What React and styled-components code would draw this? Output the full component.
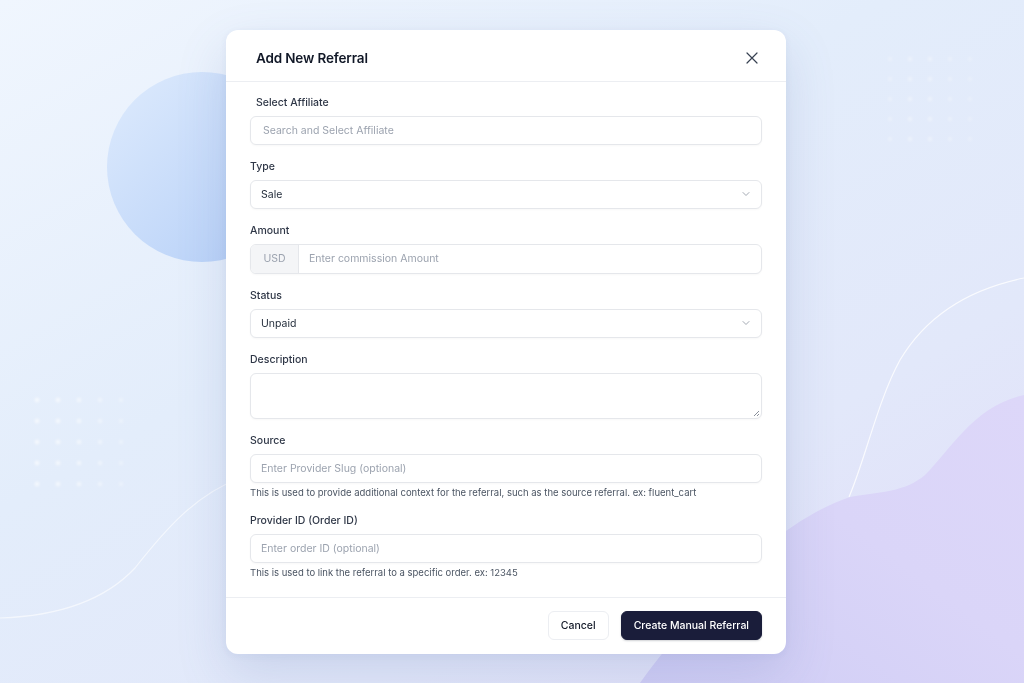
import React from 'react';
import styled, { createGlobalStyle } from 'styled-components';

const GlobalStyle = createGlobalStyle`
  html, body {
    margin: 0;
    padding: 0;
  }
  body {
    font-family: Inter, "Noto Sans", "Liberation Sans", sans-serif;
    -webkit-font-smoothing: antialiased;
  }
  * { box-sizing: border-box; }
`;

const Page = styled.div`
  position: relative;
  width: 1024px;
  height: 683px;
  overflow: hidden;
  background: linear-gradient(150deg, #f0f6fe 0%, #e3edfb 40%, #e2e8fa 70%, #e0dcf8 100%);
  display: flex;
  align-items: center;
  justify-content: center;
  padding-right: 12px;
`;

const Backdrop = styled.svg`
  position: absolute;
  inset: 0;
  width: 100%;
  height: 100%;
  z-index: 0;
`;

const Modal = styled.div`
  position: relative;
  z-index: 1;
  width: 560px;
  height: 624px;
  background: #ffffff;
  border-radius: 12px;
  box-shadow: 0 20px 50px rgba(90, 110, 170, 0.18), 0 2px 8px rgba(90, 110, 170, 0.08);
  display: flex;
  flex-direction: column;
  overflow: hidden;
`;

const Header = styled.div`
  height: 52px;
  flex-shrink: 0;
  display: flex;
  align-items: center;
  justify-content: space-between;
  padding: 6px 26px 0 30px;
  border-bottom: 1px solid #eceef2;
`;

const Title = styled.h2`
  margin: 0;
  font-size: 13.5px;
  font-weight: 600;
  color: #111827;
  letter-spacing: -0.15px;
`;

const CloseButton = styled.button`
  border: none;
  background: none;
  padding: 0;
  width: 16px;
  height: 16px;
  display: flex;
  align-items: center;
  justify-content: center;
  color: #374151;
  cursor: pointer;
`;

const Body = styled.div`
  flex: 1;
  padding: 13px 24px 0;
  display: flex;
  flex-direction: column;
`;

const Field = styled.div`
  display: flex;
  flex-direction: column;
  margin-bottom: 14px;
`;

const Label = styled.label`
  font-size: 10.5px;
  font-weight: 500;
  color: #2f3747;
  line-height: 15px;
  margin-bottom: 6px;
  padding-left: ${p => (p.$indent ? '6px' : '0')};
`;

const Control = styled.div`
  height: ${p => (p.$h || 29)}px;
  border: 1px solid #e5e7eb;
  border-radius: 6px;
  background: #fff;
  box-shadow: 0 1px 2px rgba(17, 24, 39, 0.03);
  display: flex;
  align-items: center;
  position: relative;
  overflow: hidden;
`;

const Placeholder = styled.span`
  font-size: 10.5px;
  color: #9ca3af;
  padding-left: ${p => p.$pad || 10}px;
`;

const Value = styled.span`
  flex: 1;
  font-size: 10.5px;
  color: #1f2937;
  padding-left: 10px;
`;

const Chevron = styled.svg`
  margin-right: 10px;
  color: #a3a9b3;
`;

const Addon = styled.span`
  width: 48px;
  align-self: stretch;
  display: flex;
  align-items: center;
  justify-content: center;
  background: #f4f5f7;
  border-right: 1px solid #e5e7eb;
  font-size: 10.5px;
  color: #9ca3af;
`;

const Grip = styled.svg`
  position: absolute;
  right: 1px;
  bottom: 1px;
  color: #6b7280;
`;

const Help = styled.p`
  margin: 3px 0 0;
  font-size: 9.5px;
  color: #4b5563;
  line-height: 13px;
`;

const Footer = styled.div`
  height: 57px;
  flex-shrink: 0;
  border-top: 1px solid #eceef2;
  display: flex;
  align-items: center;
  justify-content: flex-end;
  gap: 12px;
  padding: 0 24px;
`;

const Button = styled.button`
  height: 29px;
  padding: 0 12px;
  border-radius: 6px;
  font-family: inherit;
  font-size: 10.5px;
  font-weight: 500;
  cursor: pointer;
  border: 1px solid ${p => (p.$primary ? '#1a1d3a' : '#eceef2')};
  background: ${p => (p.$primary ? '#1a1d3a' : '#ffffff')};
  color: ${p => (p.$primary ? '#ffffff' : '#111827')};
  box-shadow: ${p => (p.$primary ? '0 1px 2px rgba(17,24,39,0.2)' : 'none')};
`;

const ChevronDown = () => (
  <Chevron width="10" height="10" viewBox="0 0 10 10" fill="none">
    <path d="M2 3.5 L5 6.5 L8 3.5" stroke="currentColor" strokeWidth="1" strokeLinecap="round" strokeLinejoin="round" />
  </Chevron>
);

const dots = (x0, y0, step, opacities) => {
  const out = [];
  for (let r = 0; r < 5; r++) {
    for (let c = 0; c < 5; c++) {
      out.push(
        <rect
          key={`${x0}-${r}-${c}`}
          x={x0 + c * step - 2}
          y={y0 + r * step - 2}
          width="4"
          height="4"
          rx="1"
          fill="#ffffff"
          opacity={opacities[c]}
        />
      );
    }
  }
  return out;
};

const Background = () => (
  <Backdrop viewBox="0 0 1024 683" preserveAspectRatio="none">
    <defs>
      <linearGradient id="circ" x1="0" y1="0" x2="1" y2="1">
        <stop offset="0%" stopColor="#deebfd" />
        <stop offset="100%" stopColor="#b2cdf7" />
      </linearGradient>
      <linearGradient id="blob" x1="0" y1="1" x2="1" y2="0">
        <stop offset="0%" stopColor="#cfcdf5" />
        <stop offset="55%" stopColor="#dad5f8" />
        <stop offset="100%" stopColor="#ddd7f9" />
      </linearGradient>
      <filter id="soft" x="-20%" y="-20%" width="140%" height="140%">
        <feGaussianBlur stdDeviation="1.5" />
      </filter>
    </defs>
    <circle cx="202" cy="167" r="95" fill="url(#circ)" />
    <path
      d="M640 683 C 700 600, 780 520, 850 497 C 880 492, 905 492, 925 475 C 950 450, 975 405, 1024 395 L 1024 683 Z"
      fill="url(#blob)"
    />
    <path
      d="M0 618 C 60 616, 105 600, 135 568 C 165 530, 195 495, 240 478"
      stroke="#ffffff"
      strokeOpacity="0.6"
      strokeWidth="1.2"
      fill="none"
    />
    <path
      d="M849 497 C 865 460, 878 400, 900 360 C 925 318, 965 290, 1024 278"
      stroke="#ffffff"
      strokeOpacity="0.8"
      strokeWidth="1.2"
      fill="none"
    />
    <g filter="url(#soft)">
      {dots(37, 400, 21, [0.75, 0.7, 0.6, 0.45, 0.35])}
      {dots(890, 59, 20, [0.3, 0.4, 0.4, 0.3, 0.25])}
    </g>
  </Backdrop>
);

const App = () => (
  <>
    <GlobalStyle />
    <Page>
      <Background />
      <Modal>
        <Header>
          <Title>Add New Referral</Title>
          <CloseButton aria-label="Close">
            <svg width="14" height="14" viewBox="0 0 14 14" fill="none">
              <path d="M2 2 L12 12 M12 2 L2 12" stroke="currentColor" strokeWidth="1.2" strokeLinecap="round" />
            </svg>
          </CloseButton>
        </Header>

        <Body>
          <Field>
            <Label $indent>Select Affiliate</Label>
            <Control>
              <Placeholder $pad={12}>Search and Select Affiliate</Placeholder>
            </Control>
          </Field>

          <Field>
            <Label>Type</Label>
            <Control>
              <Value>Sale</Value>
              <ChevronDown />
            </Control>
          </Field>

          <Field>
            <Label>Amount</Label>
            <Control $h={30}>
              <Addon>USD</Addon>
              <Placeholder>Enter commission Amount</Placeholder>
            </Control>
          </Field>

          <Field>
            <Label>Status</Label>
            <Control>
              <Value>Unpaid</Value>
              <ChevronDown />
            </Control>
          </Field>

          <Field>
            <Label>Description</Label>
            <Control $h={46}>
              <Grip width="7" height="7" viewBox="0 0 7 7" fill="none">
                <path d="M6 1 L1 6 M6 4 L4 6" stroke="currentColor" strokeWidth="0.8" />
              </Grip>
            </Control>
          </Field>

          <Field>
            <Label>Source</Label>
            <Control>
              <Placeholder>Enter Provider Slug (optional)</Placeholder>
            </Control>
            <Help>This is used to provide additional context for the referral, such as the source referral. ex: fluent_cart</Help>
          </Field>

          <Field>
            <Label>Provider ID (Order ID)</Label>
            <Control>
              <Placeholder>Enter order ID (optional)</Placeholder>
            </Control>
            <Help>This is used to link the referral to a specific order. ex: 12345</Help>
          </Field>
        </Body>

        <Footer>
          <Button>Cancel</Button>
          <Button $primary>Create Manual Referral</Button>
        </Footer>
      </Modal>
    </Page>
  </>
);

export default App;
